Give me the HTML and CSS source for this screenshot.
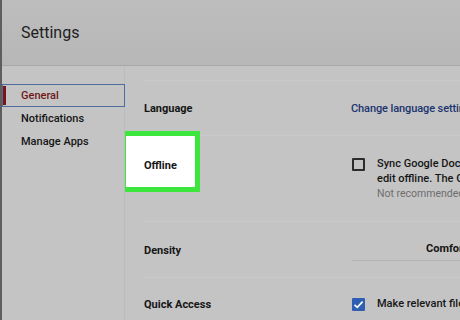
FILE: index.html
```html
<!DOCTYPE html>
<html>
<head>
    <meta charset="utf-8" />
    <title>Settings</title>
    <link rel="stylesheet" href="styles.css">
</head>
<body>
    <div class="page">
        <div class="header">Settings</div>
        <div class="main">
            <ul class="side">
                <li class="active">General</li>
                <li>Notifications</li>
                <li>Manage Apps</li>
            </ul>
            <div class="content">
                <div class="row row_lang">
                    <div class="label">Language</div>
                    <div class="value"><a class="link" href="#">Change language settings</a></div>
                </div>
                <div class="row row_off">
                    <div class="mark"></div>
                    <div class="label label_top">Offline</div>
                    <div class="value check_line">
                        <span class="box"></span>
                        <div class="check_text">
                            <p>Sync Google Docs, Sheets</p>
                            <p>edit offline. The Google</p>
                            <p class="note">Not recommended on public</p>
                        </div>
                    </div>
                </div>
                <div class="row row_dens">
                    <div class="label">Density</div>
                    <div class="value"><div class="select">Comfortable</div></div>
                </div>
                <div class="row row_quick">
                    <div class="label">Quick Access</div>
                    <div class="value check_line">
                        <span class="box box_on">
                            <svg width="11" height="11" viewBox="0 0 11 11"><path d="M1.5 5.8 L4.3 8.4 L9.6 2.6" fill="none" stroke="#fff" stroke-width="1.6"/></svg>
                        </span>
                        <div class="check_text">
                            <p>Make relevant files available</p>
                        </div>
                    </div>
                </div>
            </div>
        </div>
    </div>
</body>
</html>
```

FILE: styles.css
```css
html, body {
    margin:0;
    padding:0;
}
body {
    font-family:Roboto, "Liberation Sans", sans-serif;
    background:#c4c4c4;
    color:#161616;
    overflow:hidden;
}
.page {
    width:458px;
    height:320px;
    border-left:2px solid #5e5e5e;
    overflow:hidden;
}
.header {
    height:65px;
    line-height:65px;
    padding-left:19px;
    font-size:16px;
    color:#1e1e1e;
    background:linear-gradient(#bdbdbd, #b7b7b7);
    border-bottom:1px solid #a8a8a8;
}
.main {
    display:flex;
    height:254px;
}
.side {
    list-style:none;
    margin:0;
    padding:18px 0 0 0;
    width:122px;
    border-right:1px solid #bcbcbc;
    flex-shrink:0;
}
    .side li {
        height:23px;
        line-height:23px;
        padding-left:19px;
        font-size:11px;
        font-weight:500;
        white-space:nowrap;
    }
    .side .active {
        color:#701818;
        box-shadow:inset 0 0 0 1px #4f6c9f;
        background:linear-gradient(#7c1414, #7c1414) no-repeat 0 2px / 4px 19px;
        margin-right:-1px;
    }
.content {
    flex:1;
    padding:14px 0 0 19px;
    overflow:hidden;
}
.row {
    display:flex;
    position:relative;
    box-sizing:border-box;
    padding-top:22px;
    border-top:1px solid #cacaca;
    white-space:nowrap;
}
.row_lang {
    padding-top:21px;
    height:55px;
}
.row_off {
    height:86px;
}
.row_dens {
    height:56px;
}
.row_quick {
    padding-top:20px;
    height:55px;
}
.label {
    width:208px;
    flex-shrink:0;
    font-size:11px;
    font-weight:700;
    line-height:13px;
    position:relative;
}
.label_top {
    padding-top:1px;
}
.value {
    font-size:11px;
    line-height:13px;
}
.link {
    color:#1b3470;
    text-decoration:none;
    font-weight:500;
    margin-left:-1px;
    letter-spacing:-0.1px;
}
.check_line {
    display:flex;
}
.box {
    width:9px;
    height:9px;
    border:2px solid #2c2c2c;
    border-radius:1px;
    margin:0 12px 0 0;
    flex-shrink:0;
}
.box_on {
    background:#2f5fb3;
    border-color:#2f5fb3;
    display:flex;
    align-items:center;
    justify-content:center;
    margin-top:0;
}
    .box_on svg {
        margin:-1px;
    }
.check_text p {
    margin:0;
    line-height:15px;
    font-weight:500;
    color:#161616;
}
.check_text {
    margin-top:-2px;
}
.check_text .note {
    font-weight:400;
    font-size:10.5px;
    color:#6e6e6e;
}
.select {
    width:120px;
    padding:0 0 5px 74px;
    border-bottom:1px solid #b3b3b3;
    font-weight:700;
    margin-top:-2px;
}
.mark {
    position:absolute;
    left:-23px;
    top:-5px;
    width:69px;
    height:51px;
    border:5px solid #3de63d;
    background:#fff;
}
```
